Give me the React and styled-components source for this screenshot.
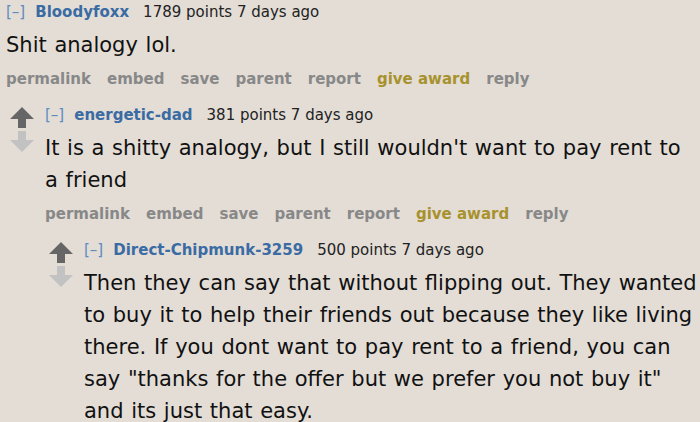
import styled, { createGlobalStyle } from 'styled-components';

const GlobalStyle = createGlobalStyle`
  html, body {
    margin: 0;
    padding: 0;
    background: #e3ddd6;
    overflow: hidden;
  }
  body {
    font-family: 'DejaVu Sans', Verdana, sans-serif;
    color: #111;
  }
`;

const Page = styled.div`
  width: 700px;
  height: 422px;
  box-sizing: border-box;
  padding: 1px 2px 0 6px;
  overflow: hidden;
`;

const Thing = styled.div`
  display: flex;
  margin-top: ${(props) => (props.nested ? '15px' : '0')};
  margin-left: ${(props) => (props.nested ? '4px' : '0')};
`;

const Votes = styled.div`
  flex: none;
  width: 35px;
  padding-top: 3px;
`;

const Entry = styled.div`
  flex: 1;
  min-width: 0;
`;

const Tagline = styled.div`
  font-size: 15px;
  line-height: 22px;
  color: #222;
  white-space: nowrap;
`;

const Expand = styled.span`
  color: #5d8cc0;
  margin-right: 10px;
`;

const Author = styled.span`
  color: #3a6ba3;
  font-weight: bold;
  margin-right: 14px;
`;

const Body = styled.div`
  margin-top: 6px;
  font-size: 21px;
  line-height: 32px;
  word-spacing: 1px;
  color: #111;
`;

const Buttons = styled.ul`
  list-style: none;
  margin: 8px 0 0;
  padding: 0;
  display: flex;
  gap: 16px;
  font-size: 15px;
  line-height: 20px;
  font-weight: bold;
  white-space: nowrap;
`;

const Button = styled.li`
  color: ${(props) => (props.gold ? '#a8922e' : '#888')};
`;

function Arrows() {
  return (
    <svg width="24" height="46" viewBox="0 0 24 46">
      <polygon points="12,0 24,12 16,12 16,21 8,21 8,12 0,12" fill="#666" />
      <polygon points="8,24 16,24 16,33 24,33 12,45 0,33 8,33" fill="#c2c2c2" />
    </svg>
  );
}

function Comment({ author, points, body, arrows, nested, children }) {
  return (
    <Thing nested={nested}>
      {arrows && (
        <Votes>
          <Arrows />
        </Votes>
      )}
      <Entry>
        <Tagline>
          <Expand>[–]</Expand>
          <Author>{author}</Author>
          {points} points 7 days ago
        </Tagline>
        <Body>{body}</Body>
        <Buttons>
          <Button>permalink</Button>
          <Button>embed</Button>
          <Button>save</Button>
          <Button>parent</Button>
          <Button>report</Button>
          <Button gold>give award</Button>
          <Button>reply</Button>
        </Buttons>
        {children}
      </Entry>
    </Thing>
  );
}

export default function App() {
  return (
    <Page>
      <GlobalStyle />
      <Comment author="Bloodyfoxx" points="1789" body="Shit analogy lol.">
        <Comment
          nested
          arrows
          author="energetic-dad"
          points="381"
          body="It is a shitty analogy, but I still wouldn't want to pay rent to a friend"
        >
          <Comment
            nested
            arrows
            author="Direct-Chipmunk-3259"
            points="500"
            body={'Then they can say that without flipping out. They wanted to buy it to help their friends out because they like living there. If you dont want to pay rent to a friend, you can say "thanks for the offer but we prefer you not buy it" and its just that easy.'}
          />
        </Comment>
      </Comment>
    </Page>
  );
}
